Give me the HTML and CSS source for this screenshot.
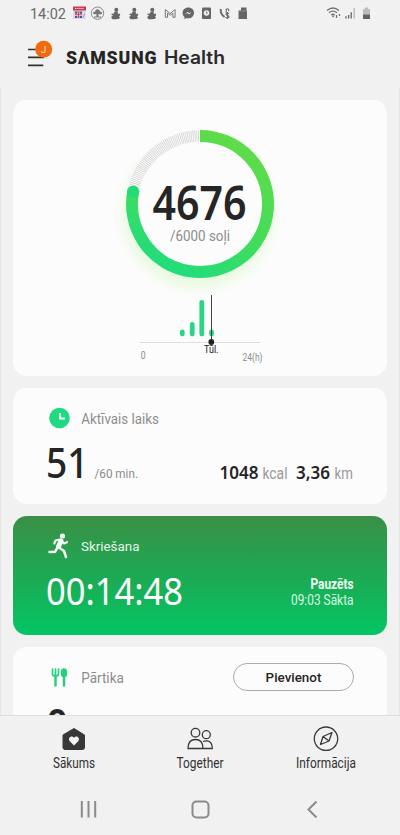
FILE: index.html
```html
<!DOCTYPE html>
<html lang="lv">
<head>
<meta charset="utf-8">
<meta name="viewport" content="width=device-width">
<title>Samsung Health</title>
<link rel="stylesheet" href="styles.css">
</head>
<body>
<header class="status">
  <svg class="row" width="400" height="28" viewBox="0 0 400 28">
    <text x="30" y="19" font-size="15.5" fill="#696969" textLength="36" lengthAdjust="spacingAndGlyphs">14:02</text>
    <g>
      <rect x="73" y="7" width="12.500" height="12" fill="#d8d8e8"/>
      <rect x="73" y="6.500" width="13" height="4" fill="#cf3a52"/>
      <path d="M75 8.500h9" stroke="#f4c8d0" stroke-width="1.200" stroke-dasharray="1.500 .6"/>
      <rect x="75" y="11.500" width="7" height="6.500" fill="#48588f"/>
      <path d="M75 14.700h7M78.500 11.500v6.500" stroke="#fff" stroke-width="2"/>
      <path d="M75 14.700h7M78.500 11.500v6.500" stroke="#d83a58" stroke-width="1"/>
      <path d="M83 17.500l2-4" stroke="#8e9ac0" stroke-width="1"/>
    </g>
    <circle cx="97.500" cy="13.200" r="6.200" fill="none" stroke="#8a8a8a"/>
    <path d="M93 13.500q0-2 2-2 .5-2.300 2.500-2.300t2.600 2.300q2 0 2 2.200-1.800 1-3.600.2l.2 2.800h-2.400l.2-2.800q-2 .8-3.500-.4z" fill="#777"/>
    <path d="M94 17h7" stroke="#777"/>
    <g fill="#666">
      <g id="figure"><circle cx="116.300" cy="9.800" r="2"/><path d="M114.800 11.500h3v2.500l1.700-.5.800 1.500-1.300 1.500 1 1-.8 1.300-3.200.4h-3.600l-1.300-2.200 2-1.400-1.800-.8.500-1.400 1.800.3z"/></g>
      <use href="#figure" x="18"/><use href="#figure" x="36"/>
    </g>
    <path d="M165.300 17.300V9.500l4.900 4 4.900-4v7.800h-2.200v-4.200l-2.700 2.200-2.700-2.200v4.200z" fill="none" stroke="#777" stroke-width="1"/>
    <path d="M188.300 7.500c-3.300 0-5.700 2.300-5.700 5.400 0 1.700.7 3.100 1.900 4.100v2.200l2-1.200c4.200 1 7.500-1.600 7.500-5.100 0-3.100-2.400-5.400-5.700-5.400z" fill="#666"/>
    <path d="M185 14.500l2.500-2.700 1.800 1.400 2.400-1.500-2.500 2.800-1.800-1.400z" fill="#f2f2f2"/>
    <rect x="202" y="7.500" width="9" height="11.500" rx="1" fill="#666"/><circle cx="206.500" cy="13" r="2.800" fill="#eee"/><path d="M206.500 11.500v1.700h1.300" stroke="#666" stroke-width=".8" fill="none"/>
    <path d="M220.800 9q-.8 4.500 3.700 8" stroke="#6b6b6b" stroke-width="2" fill="none"/><path d="M226.200 12.800V9.500q1.500-1.500 2.500 0v1.800M229 13.500q-3-1-3 .7c0 1.500 3 .8 3 2.500s-3 1.500-3.500.3M227.500 12v7" stroke="#6b6b6b" stroke-width="1.100" fill="none"/>
    <path d="M241 7.500h5.500v3H247V19h-8.500v-8.500h2.500z" fill="#666"/><path d="M239 11h8" stroke="#999" stroke-width=".7"/>
    <g fill="none" stroke="#707070" stroke-width="1.300"><path d="M327 10.500q6-5 12 0M329 12.800q4-3.300 8 0M331.200 14.800q1.800-1.500 3.600 0"/><path d="M336.500 15v3M339.500 14v2"/></g><path d="M331.500 15.500h3l-1.500 2z" fill="#666"/>
    <path d="M346 18.500v-2.300M348.600 18.500V15M351.200 18.500v-6.200" stroke="#666" stroke-width="1.300"/><path d="M354.200 18.500V8" stroke="#b5b5b5" stroke-width="1.300"/>
    <path d="M363 9h2V7.500h3V9h2v10h-7z" fill="#bdbdbd"/><path d="M363 14.500h7V19h-7z" fill="#646464"/>
  </svg>
</header>
<div class="appbar">
  <svg class="menu" width="28" height="28" viewBox="0 0 28 28">
    <path d="M2 9.500h16M2 17.300h16M2 25.300H17.300" stroke="#333" stroke-width="1.700"/>
    <circle cx="17.700" cy="9.300" r="8.500" fill="#f26a0e"/><text x="17.700" y="12.800" font-size="9.500" fill="#fde3d0" text-anchor="middle">J</text>
  </svg>
  <svg class="brand" width="162" height="24" viewBox="0 0 162 24">
    <text class="logo" x="0" y="17.500" textLength="90.500">SΛMSUNG</text>
    <text class="health" x="98" y="17.500" textLength="61" lengthAdjust="spacingAndGlyphs">Health</text>
  </svg>
</div>
<main class="feed">
  <section class="card steps">
    <svg width="374" height="276" viewBox="13 100 374 276">
      <defs>
        <linearGradient id="ring" x1=".75" y1="0" x2=".25" y2="1"><stop offset="0" stop-color="#60dc49"/><stop offset=".5" stop-color="#46dc58"/><stop offset="1" stop-color="#20dc7c"/></linearGradient>
        <filter id="glow" x="-30%" y="-30%" width="160%" height="160%"><feGaussianBlur stdDeviation="7"/></filter>
      </defs>
      <circle cx="198" cy="213" r="67" fill="none" stroke="#c9f7b4" stroke-width="11" opacity=".6" filter="url(#glow)"/>
      <circle cx="200" cy="204" r="62" fill="#fcfcfc"/>
      <path d="M200 136A68 68 0 0 0 133.500 190" fill="none" stroke="#fcfcfc" stroke-width="13"/>
      <path d="M199 136A68 68 0 0 0 133.500 190" fill="none" stroke="#d2d2d2" stroke-width="11.500" stroke-dasharray=".8 1"/>
      <path d="M200 136A68 68 0 1 1 133.600 189.500" fill="none" stroke="url(#ring)" stroke-width="12"/>
      <circle cx="133.200" cy="191.500" r="5.900" fill="#23dc79"/>
      <text class="num" x="152.500" y="219.500" font-size="46" font-weight="600" textLength="94" lengthAdjust="spacingAndGlyphs">4676</text>
      <text x="170" y="240.500" font-size="14.300" fill="#8d8d8d" textLength="60" lengthAdjust="spacingAndGlyphs">/6000 soļi</text>
      <path d="M140 342.500h120" stroke="#dedede"/>
      <path d="M182.300 332v2M192.200 324.500v9.500M201.800 302.300V334M211.500 332v2" stroke="#2bd585" stroke-width="4.800" stroke-linecap="round"/>
      <path d="M211.500 295v47" stroke="#444" stroke-width="1"/><circle cx="211.300" cy="342" r="2.900" fill="#222"/>
      <text x="204" y="353.300" font-size="10.500" fill="#222" textLength="14.500" lengthAdjust="spacingAndGlyphs">Tūl.</text>
      <text x="140.800" y="359" font-size="11.300" fill="#8b8b8b" textLength="4.800" lengthAdjust="spacingAndGlyphs">0</text>
      <text x="242.500" y="361" font-size="11.300" fill="#8b8b8b" textLength="20" lengthAdjust="spacingAndGlyphs">24(h)</text>
    </svg>
  </section>
  <section class="card active">
    <svg width="374" height="116" viewBox="13 388 374 116">
      <circle cx="59.500" cy="418" r="10.300" fill="#1edb82"/><path d="M60 413v5.500h5" fill="none" stroke="#f3fff9" stroke-width="2"/>
      <text x="81.300" y="423.500" font-size="14" fill="#8c8c8c" textLength="77.500" lengthAdjust="spacingAndGlyphs">Aktīvais laiks</text>
      <text class="num" x="46" y="478" font-size="41.500" font-weight="500" textLength="42.500" lengthAdjust="spacingAndGlyphs">51</text>
      <text x="94.500" y="478" font-size="13.600" fill="#8b8b8b" textLength="43.500" lengthAdjust="spacingAndGlyphs">/60 min.</text>
      <text class="num" x="219.500" y="478.500" font-size="18.500" font-weight="600" textLength="39" lengthAdjust="spacingAndGlyphs">1048</text>
      <text x="262.500" y="478.500" font-size="16.500" fill="#999" textLength="25" lengthAdjust="spacingAndGlyphs">kcal</text>
      <text class="num" x="296" y="478.500" font-size="18.500" font-weight="600" textLength="34" lengthAdjust="spacingAndGlyphs">3,36</text>
      <text x="334.500" y="478.500" font-size="16.500" fill="#999" textLength="18.500" lengthAdjust="spacingAndGlyphs">km</text>
    </svg>
  </section>
  <section class="card run">
    <svg width="374" height="120" viewBox="13 516 374 120">
      <circle cx="62.500" cy="536" r="2.600" fill="#f5fff8"/>
      <g fill="none" stroke="#f5fff8" stroke-linecap="round" stroke-linejoin="round"><path d="M61 541L58.500 546.500" stroke-width="5"/><path d="M60 539.500l-4.500 1-1.200 3M61.500 541l2.500 2.500 3-1.300" stroke-width="2.100"/><path d="M58.500 547.300l5.500 3.700 2 6M57.500 547.500l-2.500 4.300-5.500.2" stroke-width="2.500"/></g>
      <text x="81" y="551" font-size="13.600" fill="#e4f5e9" textLength="58.500" lengthAdjust="spacingAndGlyphs">Skriešana</text>
      <text class="timer" x="46" y="605" font-size="38.500" textLength="137" lengthAdjust="spacingAndGlyphs">00:14:48</text>
      <text x="310.500" y="589" font-size="13.800" font-weight="700" fill="#effff4" textLength="43" lengthAdjust="spacingAndGlyphs">Pauzēts</text>
      <text x="291" y="605" font-size="14.200" fill="#d7f8e4" textLength="62.500" lengthAdjust="spacingAndGlyphs">09:03 Sākta</text>
    </svg>
  </section>
  <section class="card food">
    <svg width="210" height="80" viewBox="13 647 210 80">
      <g fill="none" stroke="#28cf7c" stroke-linecap="round"><path d="M52.500 669v5q0 2 3 2t3-2v-5M55.500 669v6" stroke-width="1.700"/><path d="M55.500 676v9.500M64 675v10.500" stroke-width="2.500"/></g><ellipse cx="64" cy="672.700" rx="3.300" ry="4.500" fill="#28cf7c"/>
      <text x="81.300" y="683" font-size="14" fill="#8c8c8c" textLength="42.500" lengthAdjust="spacingAndGlyphs">Pārtika</text>
      <text class="num" x="46.500" y="739" font-size="41.500" font-weight="600" textLength="21.500" lengthAdjust="spacingAndGlyphs">0</text>
    </svg>
    <button class="add">Pievienot</button>
  </section>
</main>
<nav class="tabs">
  <a class="tab">
    <svg width="26" height="28" viewBox="61 724 26 28"><path d="M74 728.500l10.500 6.500v12.500a2 2 0 0 1-2 2h-17.500a2 2 0 0 1-2-2V735z" fill="#383838" stroke="#383838" stroke-linejoin="round"/><path d="M74 745.500l-4.200-4.200c-2.500-3 1.600-6.700 4.200-3.500 2.600-3.200 6.700.5 4.200 3.500z" fill="#f4f4f4"/></svg>
    <svg class="label" width="44" height="18"><text x="1" y="13.500" textLength="42" lengthAdjust="spacingAndGlyphs">Sākums</text></svg>
  </a>
  <a class="tab">
    <svg width="28" height="28" viewBox="186 724 28 28" fill="none" stroke="#383838" stroke-width="1.300"><circle cx="195.500" cy="732.700" r="4.300"/><circle cx="206.300" cy="734.700" r="4"/><path d="M188 748.500q0-9 7.500-9t7.500 9zM203 741.500q2-.8 4-.7 5.300.5 5.300 7.700H203"/></svg>
    <svg class="label" width="50" height="18"><text x="1.500" y="13.500" textLength="47" lengthAdjust="spacingAndGlyphs">Together</text></svg>
  </a>
  <a class="tab">
    <svg width="26" height="28" viewBox="313 724 26 28" fill="none" stroke="#383838" stroke-width="1.300" stroke-linejoin="round"><circle cx="326" cy="738.700" r="11.700"/><path d="M332 732.500l-3 8.500-8.500 3.500 2.500-8zM323 736.500l6 4.500"/></svg>
    <svg class="label" width="62" height="18"><text x="1" y="13.500" textLength="60" lengthAdjust="spacingAndGlyphs">Informācija</text></svg>
  </a>
</nav>
<footer class="system">
  <svg width="400" height="50" viewBox="0 785 400 50" fill="none" stroke="#8b8b8b" stroke-width="2"><path d="M81.800 801v16.500M88.500 801v16.500M95.200 801v16.500"/><rect x="192.500" y="801.500" width="16" height="16" rx="4"/><path d="M316.500 801.500l-8 8 8 8"/></svg>
</footer>
</body>
</html>
```
FILE: styles.css
```css
* { box-sizing: border-box; }
body {
  margin: 0;
  width: 400px;
  height: 835px;
  overflow: hidden;
  display: flex;
  flex-direction: column;
  background: #f1f1f1;
  font-family: Roboto, "Noto Sans", sans-serif;
}
svg { display: block; flex: none; }
.status { height: 28px; }
.appbar {
  height: 60px;
  display: flex;
  align-items: flex-start;
  padding: 12px 0 0 26px;
  gap: 12px;
}
.brand { margin-top: 6px; }
.logo { font: 900 17.7px Roboto, sans-serif; fill: #252525; }
.health { font: 600 18.3px Inter, sans-serif; fill: #2b2b2b; }
.feed {
  height: 627px;
  overflow: hidden;
  padding: 12px 12px 0;
  display: flex;
  flex-direction: column;
  gap: 11.500px;
  border: solid #e5e5e5;
  border-width: 0 1px;
}
.card {
  flex: none;
  border-radius: 14px;
  background: #fcfcfc;
  overflow: hidden;
}
.steps { height: 276px; }
.active { height: 116.500px; }
.run { height: 119.500px; background: linear-gradient(#3b9046, #20a652 45%, #03c763); }
.food {
  height: 140px;
  display: flex;
  align-items: flex-start;
  gap: 10px;
}
.num { font-family: "Noto Sans", sans-serif; fill: #252525; }
.timer { font-family: "Noto Sans", sans-serif; fill: #fff; }
.add {
  width: 121px;
  height: 28px;
  margin-top: 16.500px;
  padding: 0;
  border: 1px solid #aaa;
  border-radius: 14px;
  background: transparent;
  color: #252525;
  font: 500 13.4px Roboto, sans-serif;
}
.tabs {
  height: 70px;
  display: flex;
  padding: 8px 11px 0;
  border-top: 1px solid #dedede;
}
.tab {
  flex: 1;
  display: flex;
  flex-direction: column;
  align-items: center;
  gap: 2px;
}
.label { font-size: 14.2px; fill: #303030; overflow: visible; }
.system { height: 50px; }
```
